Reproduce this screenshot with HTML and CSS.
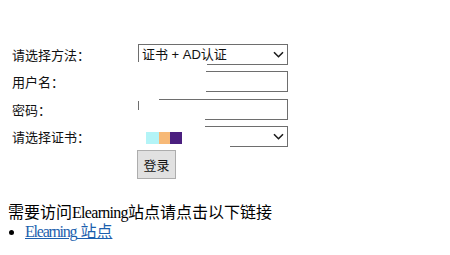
FILE: index.html
```html
<!DOCTYPE html>
<html>
<head>
<meta charset="utf-8">
<link rel="stylesheet" href="styles.css">
</head>
<body>
<div class="form">
  <div class="label">请选择方法：</div>
  <div class="field">
    <div class="select-box">
      <span class="select-text">证书 + AD认证</span>
      <svg class="chev" width="11" height="7" viewBox="0 0 11 7"><path d="M1 1.2 L5.5 5.7 L10 1.2" fill="none" stroke="#1a1a1a" stroke-width="1.6"/></svg>
    </div>
  </div>
  <div class="label">用户名：</div>
  <div class="field"><div class="input-box"></div></div>
  <div class="label">密码：</div>
  <div class="field"><div class="input-box"></div></div>
  <div class="label">请选择证书：</div>
  <div class="field">
    <div class="select-box">
      <svg class="chev" width="11" height="7" viewBox="0 0 11 7"><path d="M1 1.2 L5.5 5.7 L10 1.2" fill="none" stroke="#1a1a1a" stroke-width="1.6"/></svg>
    </div>
  </div>
  <div class="label"></div>
  <div class="field"><button class="btn">登录</button></div>

  <div class="mask m1"></div>
  <div class="mask m2"></div>
  <div class="mask m3a"></div>
  <div class="mask m3b"></div>
  <div class="mask m4a"></div>
  <div class="mask m4b"></div>
  <div class="swatches"><span class="sw cyan"></span><span class="sw orange"></span><span class="sw purple"></span></div>
</div>
<p class="note">需要访问<span class="latin">Elearning</span>站点请点击以下链接</p>
<ul class="links">
  <li><a href="#"><span class="latin-link">Elearning</span> 站点</a></li>
</ul>
</body>
</html>
```
FILE: styles.css
```css
html, body { background: #fff; }
body {
  margin: 8px;
  font-family: "Liberation Serif", "Noto Sans CJK SC", serif;
  font-size: 16px;
  color: #000;
}
.form {
  position: relative;
  margin-top: 36px;
  display: grid;
  grid-template-columns: 130px 150px;
  grid-template-rows: 27px 28px 27px 25px auto;
  width: 280px;
}
.label {
  height: 21px;
  display: flex;
  align-items: center;
  padding-left: 4px;
  font-family: "Noto Sans CJK SC", sans-serif;
  font-size: 13px;
  color: #111;
}
.field { height: 21px; }
.select-box, .input-box {
  box-sizing: border-box;
  width: 150px;
  height: 21px;
  border: 1px solid #6e6e6e;
  background: #fff;
  display: flex;
  align-items: center;
}
.select-box { justify-content: space-between; padding: 0 3px 0 3px; }
.select-text {
  font-family: "Liberation Sans", "Noto Sans CJK SC", sans-serif;
  font-size: 13px;
  color: #111;
  line-height: 1;
}
.chev { margin-left: auto; }
.btn {
  box-sizing: border-box;
  width: 39px;
  height: 29px;
  margin-top: -1px;
  margin-left: -1px;
  background: #e1e1e1;
  border: 1px solid #adadad;
  font-family: "Noto Sans CJK SC", sans-serif;
  font-size: 13px;
  color: #111;
  padding: 0;
}
.mask { position: absolute; background: #fff; }
.m1 { left: 129px; top: 18px; width: 70px; height: 5px; }
.m2 { left: 128px; top: 25px; width: 70px; height: 25px; }
.m3a { left: 129px; top: 53px; width: 22px; height: 4px; }
.m3b { left: 128px; top: 66px; width: 69px; height: 12px; }
.m4a { left: 128px; top: 80px; width: 69px; height: 25px; }
.m4b { left: 197px; top: 100px; width: 25px; height: 5px; }
.swatches { position: absolute; left: 138px; top: 88px; display: flex; }
.sw { width: 12px; height: 12px; display: block; }
.cyan { background: #b3f4f7; width: 13px; }
.orange { background: #f7b977; width: 11px; }
.purple { background: #4b1f7f; }
.note { margin: 31px 0 0; line-height: 19px; }
.latin { letter-spacing: -0.7px; }
.links { margin: 0; padding-left: 17px; line-height: 19px; }
.links a { color: #1c5fae; }
.latin-link { letter-spacing: -1.2px; }
```
